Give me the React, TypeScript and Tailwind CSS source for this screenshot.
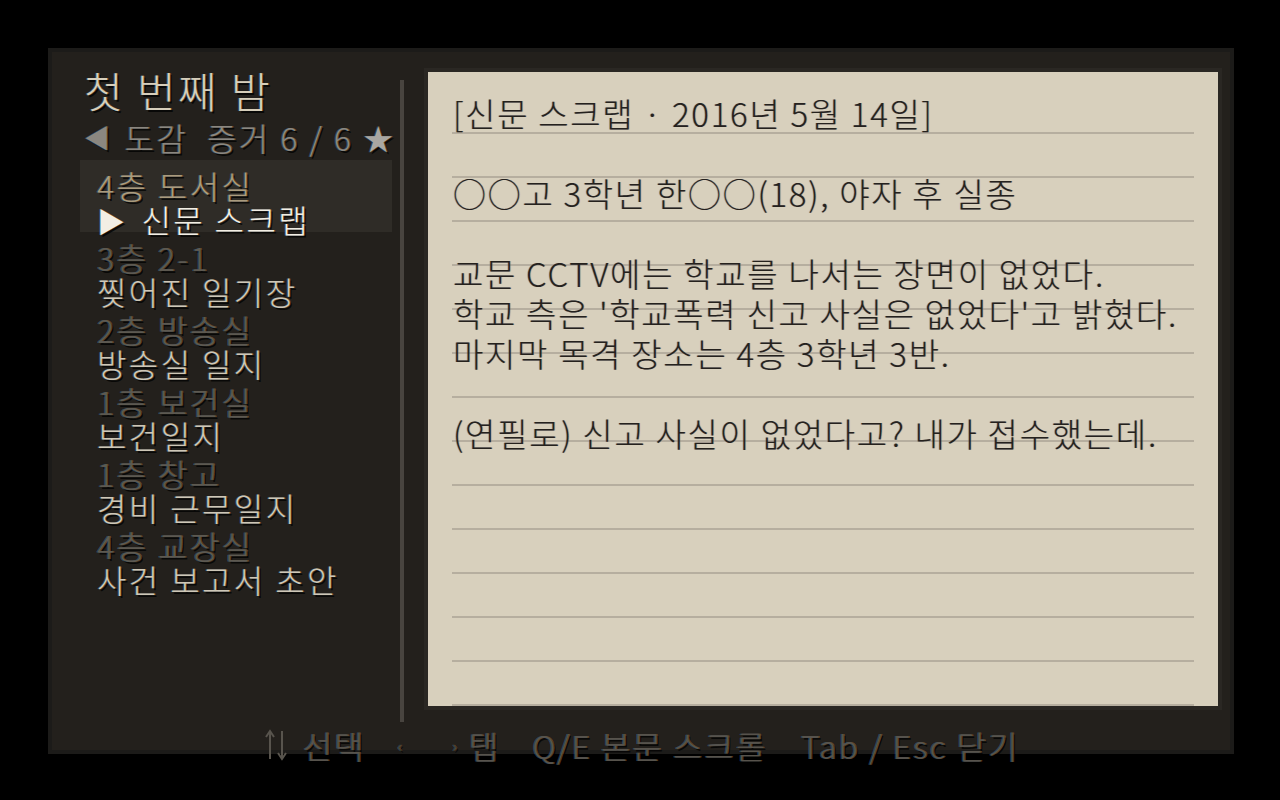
import React from "react";

const darkGlow =
  "[text-shadow:-1px_0_0_rgba(60,120,180,0.45),1px_0_0_rgba(190,120,50,0.45),2px_2px_0_rgba(0,0,0,0.75)]";

const entries = [
  { place: "4층 도서실", title: "신문 스크랩", active: true },
  { place: "3층 2-1", title: "찢어진 일기장" },
  { place: "2층 방송실", title: "방송실 일지" },
  { place: "1층 보건실", title: "보건일지" },
  { place: "1층 창고", title: "경비 근무일지" },
  { place: "4층 교장실", title: "사건 보고서 초안" },
];

const pageLines = [
  "[신문 스크랩 · 2016년 5월 14일]",
  "",
  "○○고 3학년 한○○(18), 야자 후 실종",
  "",
  "교문 CCTV에는 학교를 나서는 장면이 없었다.",
  "학교 측은 '학교폭력 신고 사실은 없었다'고 밝혔다.",
  "마지막 목격 장소는 4층 3학년 3반.",
  "",
  "(연필로) 신고 사실이 없었다고? 내가 접수했는데.",
];

function UpDownArrows() {
  return (
    <svg width="26" height="32" viewBox="0 0 26 32" fill="none" stroke="#58544d" strokeWidth="2">
      <path d="M7 30 V3" />
      <path d="M3 8 L7 2 L11 8" />
      <path d="M19 2 V29" />
      <path d="M15 24 L19 30 L23 24" />
    </svg>
  );
}

export default function App() {
  return (
    <div className="w-[1280px] h-[800px] bg-black overflow-hidden font-light font-['Noto_Sans_CJK_KR','Noto_Sans',sans-serif]">
      <div className="ml-[48px] mt-[48px] w-[1186px] h-[706px] border-4 border-[#1c1b19] bg-[#23201c] flex flex-col">
        <div className="flex h-[658px] shrink-0">
          {/* evidence list */}
          <div className="w-[348px] shrink-0 flex flex-col">
            <div className={`pl-[32px] mt-[14px] text-[42px] leading-[48px] tracking-[2.5px] text-[#d6cebb] ${darkGlow}`}>
              첫 번째 밤
            </div>
            <div className={`pl-[32px] mt-[3px] text-[32px] leading-[40px] tracking-[2.4px] text-[#8b8780] flex items-center whitespace-pre ${darkGlow}`}>
              <span className="text-[26px] mr-[12px]">◀</span>
              <span>도감  증거 6 / 6</span>
              <span className="ml-[10px] text-[#a9a7a2] text-[30px]">★</span>
            </div>
            <div className="mt-[3px] ml-[28px] w-[312px] flex flex-col">
              {entries.map((e) => (
                <div
                  key={e.title}
                  className={`h-[72px] pt-[8px] pl-[17px] text-[32px] leading-[34px] tracking-[2.4px] whitespace-nowrap ${e.active ? "bg-[#2f2c27]" : ""} ${darkGlow}`}
                >
                  <div className={e.active ? "text-[#aa9b7d]" : "text-[#5d5950]"}>{e.place}</div>
                  <div className={e.active ? "text-[#f2eee4]" : "text-[#cec7b7]"}>
                    {e.active ? (
                      <>
                        <span className="text-[28px] mr-[14px]">▶</span>
                        {e.title}
                      </>
                    ) : (
                      e.title
                    )}
                  </div>
                </div>
              ))}
            </div>
          </div>

          {/* scroll rail */}
          <div className="w-[4px] shrink-0 mt-[28px] h-[642px] bg-[#48443f]" />

          {/* paper sheet */}
          <div className="ml-[20px] mt-[16px] w-[798px] h-[642px] p-[4px] bg-[#2a2723] shrink-0">
            <div className="w-full h-full bg-[#d8d0bd] grid overflow-hidden">
              <div className="[grid-area:1/1] px-[24px] pt-[60px] flex flex-col gap-[42px]">
                {Array.from({ length: 14 }).map((_, i) => (
                  <div key={i} className="h-[2px] bg-[#b6ae9f]" />
                ))}
              </div>
              <div className="[grid-area:1/1] pl-[25px] pt-[21px] text-[33px] leading-[40px] tracking-[1.7px] text-[#25211d] [text-shadow:-1px_0_0_rgba(60,120,180,0.35),1px_0_0_rgba(190,120,50,0.35)]">
                {pageLines.map((l, i) => (
                  <div key={i} className="h-[40px] whitespace-pre">
                    {l}
                  </div>
                ))}
              </div>
            </div>
          </div>
        </div>

        {/* key hints */}
        <div className={`mt-[15px] h-[40px] shrink-0 flex items-center justify-center text-[32px] leading-[40px] tracking-[2px] text-[#57534c] whitespace-pre ${darkGlow}`}>
          <UpDownArrows />
          <span className="ml-[14px]">선택</span>
          <span className="ml-[32px] text-[16px]">‹</span>
          <span className="ml-[48px] text-[16px]">›</span>
          <span className="ml-[10px]">탭</span>
          <span className="ml-[32px]">Q/E 본문 스크롤</span>
          <span className="ml-[34px]">Tab / Esc 닫기</span>
        </div>
      </div>
    </div>
  );
}
